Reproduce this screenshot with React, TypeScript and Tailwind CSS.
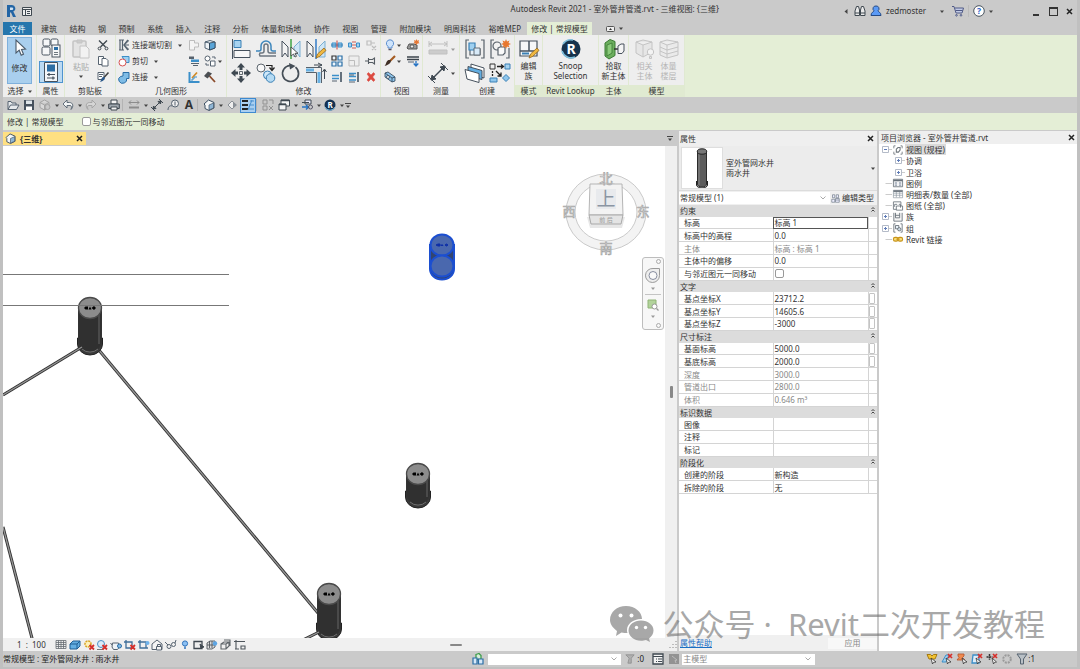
import type { ReactNode } from "react";

const D = "#566370";
const B = "#3b8fc9";
const L = "#9fd0f0";
const G = "#bdbdbd";

// small icons, 12x12
const small: Record<string, ReactNode> = {
  cut: <g fill="none" stroke="#3f4850" strokeWidth="1.4"><path d="M2 1.5l6.500 6.500M10 1.500l-6.500 6.500" /><circle cx="2.500" cy="9.500" r="1.400" strokeWidth="1" /><circle cx="9.500" cy="9.500" r="1.400" strokeWidth="1" /></g>,
  copy: <g fill="#fff" stroke={D}><path d="M1.500 1.500h5v8h-5z" /><path d="M5 3.500h4l2 2v5.500H5z" /></g>,
  brush: <g><path d="M1 1.500h6v7H1z" fill="#fff" stroke={D} /><path d="M2 3.500h4M2 5.500h3" stroke={D} /><path d="M11.500 1.500L7 6.500" stroke="#444" strokeWidth="1.600" /><path d="M7.500 6c1 1 0 4-4.500 5 1-1 1-4 3-5z" fill="#2d5a8c" /></g>,
  cope: <g fill="none" stroke={D}><path d="M2 1v10M4.500 1v10" strokeWidth="1.200" /><path d="M11 1.500L6 6l5 4.500M1 1h5M1 11h5M6 6h5" /><path d="M10 1l-4 5 4 5" strokeWidth="1.500" /></g>,
  cutGeo: <g><path d="M4 1.500h7v6H8z" fill={L} stroke={B} /><circle cx="4.500" cy="7.500" r="3.500" fill="#fff" stroke="#d65353" /></g>,
  join: <path d="M5 1.500h6v6H8.500a4 3.700 0 1 1-6-2L5 5z" fill="#7fbce6" stroke="#2a6ea6" />,
  splitGray: <path d="M1.500 1.500h5v2.500h4v4h-4v3h-5z" fill="#f4f4f4" stroke={G} />,
  cube: <g stroke="#2d4256" strokeWidth=".8"><path d="M1 3l5-1.500 5 1.500v6l-5 2-5-2z" fill="#eef3f7" /><path d="M5.500 4L11 3v6l-5.500 2z" fill="#5aa5d8" /><path d="M1 3l4.500 1v7" fill="none" /></g>,
  beam: <g><path d="M1 1.500h5v2.500H1z" fill="#56616c" /><path d="M3 4.500h8v2.500H3z" fill={B} /><path d="M3 8.500h8M5 10.500h5" stroke={D} /></g>,
  shapes: <g fill="#fff" stroke={D}><circle cx="3.500" cy="3.500" r="2.500" /><path d="M6.500 6h4.500v5H6.500zM8 2h3v2" /><path d="M2 8v2h3" fill="none" /></g>,
  demolish: <g><path d="M1.500 1v10h10" fill="none" stroke={B} strokeWidth="2" /><path d="M4 7l5-5.500" stroke="#d08a26" strokeWidth="1.700" /><path d="M4 10V8h2V6h3" fill="none" stroke={B} /></g>,
  hammer: <g><path d="M5.500 5l5.500 6" stroke="#8a4a2a" strokeWidth="1.800" /><path d="M0 5l4-4.500 4 2-4.500 5z" fill="#4b4f53" /></g>,
  splitA: <g><path d="M1 4h4v4H1zM7 4h4v4H7z" fill={L} stroke={B} /><path d="M0 6h12" stroke="#2a6ea6" strokeWidth=".8" /><path d="M6 1.500v9" stroke="#c9453c" /></g>,
  splitB: <g><path d="M.5 4h3v4h-3zM8.500 4h3v4h-3z" fill={L} stroke={B} /><path d="M5 2v2M7 2v2M5 8v2M7 8v2M5 5v2M7 5v2" stroke="#c9453c" strokeWidth=".9" /></g>,
  unpin: <g fill="none" stroke={G}><path d="M2 2h4v4H2zM6 4h4M7 7l4 4M11 7l-4 4" strokeWidth="1.200" /></g>,
  array: <g fill="#eef6fc" stroke="#2a6ea6" strokeWidth="1.200"><path d="M1 1h4v4H1z" stroke="#333" /><path d="M7 1h4v4H7zM1 7h4v4H1zM7 7h4v4H7z" /></g>,
  scale: <g fill="none" stroke={G}><path d="M1 1h10v10H1zM1 5.500h5.500V11" /></g>,
  pin: <path d="M0 6h3.500M3.500 3v6M3.500 4.500h4l2-1.500v6l-2-1.500h-4" fill="none" stroke="#555c63" strokeWidth="1.100" />,
  trim: <g><path d="M1 4.500h7M1 7.500h7" stroke={B} strokeWidth="1.500" /><path d="M10 1v10" stroke={D} strokeWidth="1.800" /><path d="M1 10h5" stroke={D} /></g>,
  trimMulti: <g><path d="M1 2.500h7M1 5.500h7M1 9h7" stroke={B} strokeWidth="1.500" /><path d="M10 1v10" stroke={D} strokeWidth="1.800" /><path d="M1 11h6M1 4h5" stroke={D} /></g>,
  del: <path d="M2 3l1.500-1.500L6 4l2.500-2.500L10 3 7.700 6 10 9l-1.500 1.500L6 8l-2.500 2.500L2 9l2.300-3z" fill="#dc4a41" stroke="#dc4a41" strokeWidth=".5" />,
  bulb: <g><path d="M6 .8a3.600 3.600 0 0 1 2 6.600V9H4V7.400A3.600 3.600 0 0 1 6 .8z" fill="#cfe4fb" stroke="#5a8ed0" /><path d="M4.500 10.500h3" stroke="#556" strokeWidth="1.500" /></g>,
  paint: <g><path d="M11 1L6 6" stroke="#a55c22" strokeWidth="2.200" /><path d="M6.500 5c1.500 1.500-1 5-6 6 1.500-1 1.500-5 4-6z" fill="#3f2e24" /></g>,
  box: <g stroke="#2d4256" strokeWidth=".8"><path d="M1 2l3-1 7 5v4l-3 1-7-5z" fill="#8ec4ea" /><path d="M1 2l7 5v4M8 7l3-1" fill="none" /><circle cx="4" cy="6" r="1.500" fill="#fff" /></g>,
  gearFx: <g><path d="M0 9l2-4h5l3 1v4H1z" fill="#9b9b9b" stroke="#555" /><circle cx="5" cy="7.500" r="1.700" fill="#eee" stroke="#555" /><path d="M9.500 0l.8 1.700L12 1l-.5 2 1 1.300-2 .2-1 1.500-1-1.500-2-.2 1-1.300L7 1l1.700.7z" fill="#e57734" /></g>,
  thin: <g><path d="M0 2h12M0 4.500h12" stroke="#3c444c" strokeWidth="1.400" /><path d="M1 7h6" stroke={D} /><path d="M9 6v5M6.700 8.500L9 11l2.300-2.500" stroke="#2774c4" strokeWidth="1.300" fill="none" /></g>,
  open: <path d="M1 10.500v-8h3l1 1.500h4v2M1 10.500L3.500 6H12l-2.500 4.500z" fill="#e6e9ec" stroke={D} />,
  save: <g><path d="M1 1h10v10H1z" fill="#46515e" /><path d="M3 1.500h6v3.500H3z" fill="#dfe5ea" /><path d="M3 7.500h6V11H3z" fill="#fff" /></g>,
  cubeGray: <g stroke="#a3a3a3"><path d="M1 3.500L5.500 1 10 3.500v5L5.500 11 1 8.500zM1 3.500L5.500 6 10 3.500M5.500 6v5" fill="#d9d9d9" /><circle cx="8.500" cy="8" r="2.500" fill="#c8c8c8" /></g>,
  undo: <path d="M5 1L1 5l4 4V6.500h3c1.500 0 2 1.500 1 4 3-3 2-7-1.500-7H5z" fill="#f2f4f5" stroke={D} strokeWidth=".9" />,
  redo: <path d="M7 1l4 4-4 4V6.500H4C2.500 6.500 2 8 3 10.500c-3-3-2-7 1.500-7H7z" fill="#d5d5d5" stroke="#a3a3a3" strokeWidth=".9" />,
  print: <g fill="#f4f4f4" stroke="#3f4850"><path d="M3 1h6v4H3z" /><path d="M.7 5h10.600v4.500H.7z" fill="#9fa7ae" /><path d="M3 8h6v3H3z" /></g>,
  meas: <g stroke="#8c8c8c" fill="none"><path d="M1 3.500h10M3 1.500l-2 2 2 2M9 1.500l2 2-2 2" /><path d="M1 8.500h10" strokeWidth="2" /></g>,
  dim: <g stroke="#3f4850" fill="none"><path d="M2 10l8-8" /><path d="M2 10l.5-3L5 9.500zM10 2l-.5 3L7 2.500z" fill="#3f4850" /><path d="M0 8l4 4M8 0l4 4" /></g>,
  tag: <g fill="none" stroke={D}><circle cx="8" cy="4.500" r="3.500" fill="#eee" /><path d="M8 2.500v4M5 7c-2-1-4 1-4 4" /></g>,
  house: <g><path d="M1 5l4.500-4L11 3.500V9l-5 2.500-4-2V6z" fill="#f4f6f7" stroke="#3d5063" /><path d="M6 6l4.500-2v5L6 11z" fill="#8fb6d6" stroke="#3d5063" strokeWidth=".7" /></g>,
  section: <g><path d="M6 2l4 4-4 4-4-4z" fill="#eee" stroke="#8a9097" /><path d="M7 2.500L11 6 7 9.500z" fill="#8a9097" /></g>,
  lines: <g><path d="M0 2h6M0 6h6M0 10h6" stroke="#222" strokeWidth="2" /><path d="M6 11l4-10" stroke="#4a90cf" /><path d="M8 2h4M7 6h5M7 10h5" stroke="#4a90cf" /></g>,
  closeWin: <g fill="none" stroke="#929292"><path d="M1 1h4v4H1zM1 7h4v4H1zM7 1h4v4M7 7l4 4M11 7l-4 4" /></g>,
  wins: <g fill="#f4f4f4" stroke="#3f4850"><path d="M3 1h8.500v6H3z" /><path d="M1 5h7v6H1z" /><path d="M1 5.500h7M3 1.500h8" strokeWidth="1.500" /></g>,
  ui: <g><path d="M1 3.500h7M4 1h6v4H4z" stroke="#3f4850" fill="#eef" /><path d="M1 8h6M5 6l2.500 2L5 10.500" stroke="#2774c4" strokeWidth="1.500" fill="none" /><circle cx="9.500" cy="8" r="2" fill="none" stroke="#556" /></g>,
  lookup: <g><circle cx="6" cy="6" r="5.500" fill="#143252" /><path d="M1 8a5.500 5.500 0 0 0 10 0" stroke="#6fb5dc" fill="none" /><text x="6" y="9" textAnchor="middle" fontSize="8" fontWeight="700" fill="#fff">R</text></g>,
  mesh: <path d="M1 1.500h10v8H1zM1 3.500h10M1 5.500h10M1 7.500h10M3.500 1.500v8M6 1.500v8M8.500 1.500v8" fill="#eee" stroke="#666c72" strokeWidth=".8" />,
  solid: <path d="M1 5l3-3h7v5l-3 3H1zM1 5h7v5M8 5l3-3" fill="#62aee2" stroke="#1f5f94" />,
  sunOff: <g><circle cx="5" cy="5" r="3" fill="#fff2b8" stroke="#d8a324" strokeWidth="1.500" strokeDasharray="2 .8" /><path d="M6.500 6l4.500 4.500M11 6l-4.500 4.500" stroke="#d62f2b" strokeWidth="1.800" /></g>,
  shadeOff: <g><circle cx="5" cy="5" r="3.500" fill="#dcecf8" stroke="#4d91c6" /><path d="M1 10.500h6" stroke="#777" /><path d="M6.500 6l4.500 4.500M11 6l-4.500 4.500" stroke="#d62f2b" strokeWidth="1.800" /></g>,
  teapot: <g fill="#eef3f7" stroke={D}><path d="M2.500 4h6l1 4-2 2.500h-4L2 8zM2 6L.5 4" /><circle cx="9.500" cy="7" r="2" fill="#7fb8e4" stroke="#2a6ea6" /></g>,
  cropOff: <g><path d="M2 1v8h8M0 3h8v6" fill="none" stroke="#3f6f9a" strokeWidth="1.300" /><path d="M6.500 6l4.500 4.500M11 6l-4.500 4.500" stroke="#d62f2b" strokeWidth="1.800" /></g>,
  cropOn: <g><path d="M2 1v8h8M0 3h8v6" fill="none" stroke="#3f6f9a" strokeWidth="1.300" /><circle cx="9.500" cy="4" r="2" fill="#6fb3ec" /></g>,
  lock3d: <g fill="#f4f4f4" stroke={D}><path d="M1 5l5-4 5 4v5.500H1z" /><path d="M5.500 7.500h5v3.500h-5zM6.500 7V5.500h3V7" /></g>,
  glasses: <g fill="none" stroke={D}><path d="M0 3l3 3M11 1l-1 3" /><circle cx="4" cy="7.500" r="2" /><circle cx="8.500" cy="5.500" r="2" /></g>,
  bulbMini: <g><circle cx="6" cy="4.500" r="2.600" fill="#8bc0f3" stroke="#3173bb" /><path d="M6 7.500V10" stroke="#3173bb" strokeWidth="1.500" /></g>,
  screen: <g fill="#eee" stroke="#3f4850"><path d="M1 2.500h8v7H1z" strokeWidth="1.300" /><path d="M7 5l4 3-2 .5L8 10z" fill="#3f4850" /></g>,
  analytic: <g><path d="M1 4l3-2h5v6l-3 2H1zM3.500 2v7M6 2v7M1 6h8" fill="#ddd" stroke="#4f565c" strokeWidth=".9" /><circle cx="9" cy="4.500" r="2.200" fill="#5da5e4" /></g>,
  link3d: <path d="M1 5l3-2h5v4l-3 3H1zM4 1h6v6M1 5h5v5M6 5l3-2" fill="none" stroke="#60666b" strokeWidth="1.100" />,
  constraint: <path d="M2 1v9M2 2.500h9M1 10h4M7 7h4v3H7zM0 2.500h2" fill="none" stroke="#4f565c" strokeWidth="1.100" />,
  filter: <path d="M1 1h10L7.500 6v5h-3V6z" fill="#b9c0c6" stroke={D} />,
  filterGray: <path d="M1 1h10L7.500 5v6h-4L5 5z" fill="#b0b0b0" stroke="#8e8e8e" />,
  worksets: <g fill="#d9edda"><path d="M4 1.500l3-1 2 2v4H4z" stroke="#3f9d4b" strokeWidth="1.300" /><path d="M1 5h4v6H1zM6.500 6H11v5H6.500z" fill="#d8e9f8" stroke="#2a6ea6" strokeWidth="1.200" /></g>,
  sheet: <g><path d="M1 1h10v10H1z" fill="#f3f3f3" stroke="#3f4850" strokeWidth="1.300" /><path d="M1 3.500h10M4 6h1M6 6h4M4 8.500h1M6 8.500h4" stroke="#3f4850" /></g>,
  press: <g><path d="M1 1h10v10H1z" fill="#929292" /><path d="M4 3l5 4-2 .5 1 2.500" stroke="#bbb" fill="none" /></g>,
  selA: <g><path d="M1 1.500h3.500L6 3l1.500-1.500H11L9 6H3z" fill="#f1c232" stroke="#a67a12" /><path d="M5 5l5 4-2.500.3L6.500 11z" fill="#fff" stroke="#333" strokeWidth=".8" /></g>,
  selB: <g><path d="M1 9l4-7h3L5 9z" fill={L} stroke={B} /><path d="M7 1l4 4M11 1L7 5" stroke="#d62f2b" strokeWidth="1.700" /><path d="M5 5l5 4-2.500.3L6.500 11z" fill="#fff" stroke="#333" strokeWidth=".8" /></g>,
  selC: <g><path d="M2 1h6v2L6.500 4.500 9 7H1l2-2.500L2 3z" fill="#ef8a4f" stroke="#b4522a" strokeWidth=".8" /><path d="M6 5l5 4-2.500.3L7.500 11z" fill="#fff" stroke="#333" strokeWidth=".8" /></g>,
  selD: <g><path d="M2 2h6v8H1z" fill="#dcedfa" stroke={B} strokeWidth="1.300" /><path d="M7 1l4 4M11 1L7 5" stroke="#d62f2b" strokeWidth="1.700" /><path d="M5 5l5 4-2.500.3L6.500 11z" fill="#fff" stroke="#333" strokeWidth=".8" /></g>,
  selE: <g><path d="M3.500 1v6M.5 4h6" stroke="#333" strokeWidth="1.500" strokeDasharray="2 .6" /><path d="M7 1l4 4M11 1L7 5" stroke="#d62f2b" strokeWidth="1.700" /><path d="M6 5l4.500 4-2 .3-1 1.700z" fill="#fff" stroke="#333" strokeWidth=".8" /></g>,
  spin: <circle cx="6" cy="6" r="3.800" fill="none" stroke="#9a9a9a" strokeWidth="2" strokeDasharray="2 1" />,
  editType: <g fill="#eef" stroke="#6c7885" strokeWidth=".9"><path d="M2 1h3v4H2zM7 1h3v4H7zM1 7h4v4H1z" /><path d="M6 6h5v5H6zM6 8h5" /></g>,
  views: <g fill="none" stroke="#6f767c"><path d="M3 1H1v3M1 8v3h2M9 1h2v3M11 8v3H9" /><path d="M4 5l2-2h2.500v3l-2 2.500H4z" fill="#fff" strokeWidth="1.300" /></g>,
  legend: <g><path d="M.5 1.500h11v9H.5z" fill="#fff" stroke="#68717a" /><path d="M.5 3h11" stroke="#68717a" strokeWidth="2" /><path d="M2 6h3M7 6h3M2 8.500h3M7 8.500h3" stroke="#4b5c77" /></g>,
  schedule: <g><path d="M.5 1.500h11v9H.5zM.5 5h11M.5 7.500h11M4 3v7M8 3v7" fill="#fff" stroke="#8b95a0" strokeWidth=".8" /><path d="M.5 2.500h11" stroke="#68717a" strokeWidth="2" /></g>,
  sheets: <g fill="#fff" stroke="#68717a"><path d="M.5 1h9v9h-9z" /><path d="M2 7V4h3M4 6h7.500v5H4zM7 4h2v4" /></g>,
  family: <g fill="none" stroke="#626b74"><path d="M1 1v10h10V1" fill="#f5f5f5" /><path d="M3 1v6h5V1M3 4h5" /></g>,
  group: <g fill="none" stroke="#626b74"><path d="M3 1H1v10h2M9 1h2v10H9" /><path d="M3 3h4v4H3z" fill="#e7f0f8" /><circle cx="7.500" cy="7.500" r="2" fill="#cfdce8" /></g>,
  chain: <g fill="#f7dc76" stroke="#c8941a" strokeWidth="1.300"><rect x=".5" y="4" width="5.500" height="4.500" rx="2" /><rect x="6" y="4" width="5.500" height="4.500" rx="2" /><path d="M4 6.200h4" /></g>,
  binoc: <g fill="#e9e9e9" stroke="#3f4850"><path d="M2.500 1.500h2L5.500 5v5.500h-4.500V6zM9.500 1.500h-2L6.500 5v5.500H11V6zM1 8h4.500M6.500 8H11" /></g>,
  user: <g fill="#5b9af5" stroke="#244a86"><path d="M6 1a2.700 2.700 0 0 1 2 4.800c0 1.200 3 1.200 3 4.700H1C1 7 4 7 4 5.800A2.700 2.700 0 0 1 6 1z" /></g>,
  cart: <g fill="#c3cbe6" stroke="#505a86"><path d="M0 1.500h2L4 8h6l1.500-5H3" /><path d="M3.500 5.500h7" /><circle cx="4.500" cy="10.300" r=".8" /><circle cx="9" cy="10.300" r=".8" /></g>,
  help: <g><circle cx="6" cy="6" r="5.300" fill="#fff" stroke="#4a5560" /><text x="6" y="9" textAnchor="middle" fontSize="8.500" fontWeight="700" fill="#2b61c9">?</text></g>,
};

// large icons, 20x20
const large: Record<string, ReactNode> = {
  cursor: <path d="M6 2v13l3.200-2.800 2 5 2.300-1-2-4.800 4-.400z" fill="#fff" stroke="#4a5a6a" strokeWidth="1.100" />,
  types: <g fill="#f6f7f8" stroke="#4a5560"><rect x="2" y="1" width="7" height="7" rx="1.500" /><rect x="10" y="1" width="7" height="7" rx="1.500" /><rect x="1" y="9" width="8" height="8" rx="1.500" /><rect x="11" y="7" width="8" height="12" /><path d="M13 9h4v3h-4z" fill="#2a6ea6" stroke="none" /><path d="M13 14.500h4M13 16.500h4" strokeWidth=".8" /></g>,
  props: <g><path d="M3.500.5h13v19h-13z" fill="#f4f6f8" stroke="#45515d" /><path d="M6 2.500h8v7H6z" fill="#2d6da3" /><path d="M6 12.500h8M6 16h8" stroke="#45515d" /><path d="M8 11v3M12 14.500v3" stroke="#45515d" strokeWidth="1.300" /></g>,
  paste: <g fill="#e4e4e4" stroke="#c4c4c4"><rect x="2" y="2" width="13" height="16" rx="1" strokeWidth="1.500" /><path d="M6 1h5v3H6z" fill="#ccc" /><path d="M9 7h6l3 3v9H9z" fill="#f2f2f2" /></g>,
  align: <g stroke="#46515d"><path d="M1.500 0v20" /><path d="M3 1.500h7v7H3z" fill="#a7d3f0" stroke="#3a80b5" /><path d="M3 11.500h16v7H3z" fill="#f7f7f7" /></g>,
  offset: <g fill="none" strokeWidth="1.500"><path d="M0 12h3a2 2 0 0 0 2-2V7a5 5 0 0 1 10 0v3a2 2 0 0 0 2 2h3" stroke="#3e87bd" /><path d="M20 17H4a2.500 2.500 0 0 1 0-3h2a2 2 0 0 0 2-2V7a2 2 0 0 1 4 0v5a2 2 0 0 0 2 2h6" stroke="#6c7680" /></g>,
  mirrorPick: <g><path d="M1 2l6 6v10l-3-4-3 4z" fill="#f3f3f3" stroke="#46515d" /><path d="M19 2l-6 6v10l3-4 3 4z" fill="#cfe6f6" stroke="#7aaed1" /><path d="M10 0v20" stroke="#4aa94f" strokeWidth="1.600" /><path d="M10 8v9l2.500-2 1.500 3 1.500-.7-1.500-3h3z" fill="#fff" stroke="#444" strokeWidth=".9" /></g>,
  mirrorDraw: <g><path d="M1 2l6 6v10l-3-4-3 4z" fill="#f3f3f3" stroke="#46515d" /><path d="M19 2l-6 6v10h6z" fill="#cfe6f6" stroke="#7aaed1" /><path d="M10 0v20" stroke="#2774c4" strokeWidth="1.400" /><path d="M10 19l1.500-4L18 9l2 2.500-6.500 6z" fill="#f0b840" stroke="#93641a" strokeWidth=".8" /></g>,
  move: <g fill="#3f4952"><path d="M10 0l4 4.500h-2.500V7h-3V4.500H6zM10 20l4-4.500h-2.500V13h-3v2.500H6zM0 10l4.500-4v2.500H7v3H4.500V14zM20 10l-4.500-4v2.500H13v3h2.500V14z" /><path d="M8.500 8.500h3v3h-3z" fill="#eee" stroke="#3f4952" strokeWidth=".8" /></g>,
  copyEl: <g><circle cx="5" cy="5" r="4" fill="#f7f7f7" stroke="#5d666e" /><path d="M10 2.500h6v4M13.500 4.500l2.500 3L18.500 4.500" fill="none" stroke="#222" strokeWidth="1.200" /><circle cx="11.500" cy="12" r="4" fill="#cfe8f9" stroke="#3a80b5" /><circle cx="14.500" cy="15" r="4.300" fill="#b4daf3" stroke="#3a80b5" /></g>,
  rotate: <g fill="none"><path d="M14.500 4.200A8 8 0 1 1 9 2.500" stroke="#454e57" strokeWidth="1.700" /><path d="M8 0l6.500 3L9 6.500z" fill="#454e57" /></g>,
  corner: <g fill="none"><path d="M0 4.500h15.500V20M0 9.500h10.500V20" stroke="#59626b" /><path d="M0 7h8M13 9v11" stroke="#67b1e4" strokeWidth="3" /><path d="M8 2h8M18.500 7v9M12 0l4 2-4 2M16.500 9l2-3 2 3" stroke="#3f4952" /></g>,
  ruler: <g stroke="#c0c0c0" fill="none"><path d="M1 5h18M1 2v6M19 2v6M4 3L1 5l3 2M16 3l3 2-3 2" /><path d="M1 11h18v4H1z" fill="#ccc" /></g>,
  measure: <g stroke="#3f4952" fill="none"><path d="M3 17L17 3" strokeWidth="1.500" /><path d="M0 13l7 7M13 0l7 7" /><path d="M3 17l1-5 4 4zM17 3l-1 5-4-4z" fill="#3f4952" /></g>,
  assembly: <g fill="none" stroke="#59626b" strokeWidth="1.200"><path d="M4 1H1v18h3M16 1h3v18h-3" /><path d="M5 10h10v6H5z" fill="#e8f2fa" /><path d="M4 4h6v7H4z" fill="#9fd0f0" stroke="#3a80b5" /><path d="M9 9h6v7H9z" fill="#d8eaf8" stroke="#59626b" strokeWidth=".9" /></g>,
  group: <g fill="none" stroke="#59626b" strokeWidth="1.200"><path d="M4 1H1v18h3M16 19h3V9" /><circle cx="7" cy="7" r="4" fill="#f2f2f2" /><path d="M8 9l2-1h5v6l-2 2H8z" fill="#fafafa" /><path d="M16 0l1 2.500L19.500 1.500 18.500 4 21 5l-2.500 1 1 2.500-2.500-1L16 10l-1-2.500-2.500 1 1-2.500-2.500-1 2.500-1-1-2.500 2.500 1z" fill="#e8772e" stroke="none" /></g>,
  sheetsBlue: <g stroke="#46515d"><path d="M6 1l13 4v10L6 11z" fill="#fff" /><path d="M3 3.500l14 4v9L3 13z" fill="#62aee2" /><path d="M0 6.500l14 4v9L2 16z" fill="#fff" /></g>,
  replace: <g><path d="M15 1h5v5h-5z" fill="#a7d3f0" stroke="#3a80b5" /><path d="M0 1h5v5H0z" fill="#eee" stroke="#333" /><path d="M7 3.500h6M11 1.500l2.500 2-2.500 2M2.500 8v2M2.500 11v2M6 8l5 5M11 9.500V13H7.500" stroke="#222" fill="none" strokeWidth="1.300" /><path d="M0 15h7v4H0z" fill="#8ec6ed" stroke="#3a80b5" /><path d="M16 11.500l3.500 3.500-3.500 3.500-3.500-3.500z" fill="#8ec6ed" stroke="#3a80b5" /></g>,
  editFam: <g><path d="M1 2h17v15H1z" fill="#f6f7f8" stroke="#46515d" strokeWidth="1.200" /><path d="M1 12h9V2M10 12h8" fill="none" stroke="#46515d" strokeWidth="1.500" /><path d="M3 14.500h7" stroke="#3a80b5" strokeWidth="2" /><path d="M10 19l1.500-4L18 9l2 2.500-6.500 6z" fill="#f0b840" stroke="#93641a" strokeWidth=".8" /></g>,
  snoop: <g><circle cx="10" cy="10" r="9.500" fill="#16324c" /><path d="M2 5a9.500 9.500 0 0 1 10-4M1 12a9.500 9.500 0 0 0 13 6" stroke="#7fbfdc" strokeWidth="1.600" fill="none" /><text x="10" y="15" textAnchor="middle" fontSize="14" fontWeight="700" fill="#fff">R</text></g>,
  host: <g><path d="M1 4l5-3.500 5 2v14L5 20l-4-3z" fill="#6cae5e" stroke="#3b7a34" /><path d="M3 6l5-2v10l-5 3z" fill="#8ccb7c" stroke="#3b7a34" strokeWidth=".8" /><path d="M10 10h4" stroke="#333" strokeWidth="1.500" /><path d="M14 7l3-2h3v7l-2 2.500h-4z" fill="#f4f4f4" stroke="#46515d" /></g>,
  massHost: <g fill="#e6e6e6" stroke="#c4c4c4"><path d="M1 3l7-2 9 2v10l-9 5-7-4zM1 3l7 3 9-3M8 6v12" /><circle cx="15.500" cy="13" r="3.200" fill="#f3f3f3" /><path d="M14.500 17.500h2v2h-2z" /></g>,
  massFloor: <g fill="#eaeaea" stroke="#c4c4c4"><path d="M1 3l7-2 11 2v13l-11 3-7-3zM1 3l7 3 11-3M8 6v13M1 8l7 3 11-3M1 12l7 3 11-3" /></g>,
};

function Ico({ n, s = 12 }: { n: string; s?: number }) {
  return <svg width={s} height={s} viewBox="0 0 12 12" className="shrink-0 overflow-visible">{small[n]}</svg>;
}

function Big({ n, s = 20 }: { n: string; s?: number }) {
  return <svg width={s} height={s} viewBox="0 0 20 20" className="shrink-0 overflow-visible">{large[n]}</svg>;
}

function Caret({ light }: { light?: boolean }) {
  return (
    <svg width="4" height="3" viewBox="0 0 4 3" className="shrink-0">
      <path d="M0 .500h4L2 3z" fill={light ? "#9a9a9a" : "#444"} />
    </svg>
  );
}

function Chevron() {
  return (
    <svg width="6" height="4" viewBox="0 0 6 4" className="pointer-events-none shrink-0">
      <path d="M.500.500L3 3 5.500.500" fill="none" stroke="#aaa" />
    </svg>
  );
}

function Close() {
  return (
    <svg width="7" height="7" viewBox="0 0 7 7">
      <path d="M1 1l5 5M6 1L1 6" stroke="#222" strokeWidth="1.500" />
    </svg>
  );
}

function IconBtn({ n, label, big, className = "" }: { n: string; label: string; big?: boolean; className?: string }) {
  return (
    <button aria-label={label} className={`flex items-center justify-center ${className}`}>
      {big ? <Big n={n} /> : <Ico n={n} />}
    </button>
  );
}

function Panel({ label, width, context, children }: { label: ReactNode; width: string; context?: boolean; children: ReactNode }) {
  return (
    <section className={`flex shrink-0 flex-col border-r border-[#e0e9d2] bg-[#eeeeee] ${width}`}>
      <div className="flex h-[50px] items-start justify-center pt-0.5">{children}</div>
      <div className={`flex h-3 items-center justify-center whitespace-nowrap ${context ? "bg-[#e0ead1]" : ""}`}>{label}</div>
    </section>
  );
}

const menuTabs = ["建筑", "结构", "钢", "预制", "系统", "插入", "注释", "分析", "体量和场地", "协作", "视图", "管理", "附加模块", "明周科技", "裕唯MEP"];

function TitleBar() {
  return (
    <header className="flex h-[22px] items-center pr-1">
      <div className="flex flex-1 items-center gap-1.5 pl-1">
        <svg width="9" height="12" viewBox="0 0 9 12">
          <path d="M0 0h5a3.400 3.400 0 0 1 1.300 6.500L9 12H6L4 7.500H3V12H0z" fill="#2365a5" />
          <path d="M3 2.500h2a1.200 1.200 0 0 1 0 2.500H3z" fill="#cfe1f2" />
        </svg>
        <svg width="10" height="9" viewBox="0 0 10 9">
          <path d="M.500.500h9v8h-9zM.500 2.500h9M3.500 2.500v6M5 4.500h3M5 6.500h3" fill="#eee" stroke="#3f4850" />
        </svg>
      </div>
      <h1 className="pb-1 font-normal whitespace-nowrap">Autodesk Revit 2021 - 室外管井管道.rvt - 三维视图: {"{三维}"}</h1>
      <div className="ml-[125px] flex items-center">
        <svg width="4" height="5" viewBox="0 0 4 5"><path d="M3.500 0v5L.500 2.500z" fill="#444" /></svg>
        <IconBtn n="binoc" label="搜索" className="ml-1.5" />
        <button className="ml-1 flex items-center gap-1"><Ico n="user" />zedmoster</button>
        <span className="ml-3.5"><Caret /></span>
        <IconBtn n="cart" label="商店" className="ml-2" />
        <span className="mx-1 h-3 w-px bg-[#bcbcbc]" />
        <IconBtn n="help" label="帮助" />
        <span className="ml-1"><Caret /></span>
        <button aria-label="最小化" className="ml-10 flex h-[9px] w-2 items-end"><span className="h-0.5 w-1.5 bg-[#333]" /></button>
        <button aria-label="最大化" className="ml-2 size-[9px] border border-t-2 border-[#333]" />
        <button aria-label="关闭" className="ml-2"><Close /></button>
      </div>
    </header>
  );
}

function MenuBar() {
  return (
    <nav className="flex h-[13px] items-center">
      <button className="h-full w-[29px] bg-[#2576ad] text-white">文件</button>
      <div className="ml-[9px] flex w-[480px] shrink-0 justify-between whitespace-nowrap">
        {menuTabs.map((t) => <button key={t}>{t}</button>)}
      </div>
      <button className="ml-1.5 h-full w-[65px] shrink-0 bg-[#e4eed6] whitespace-nowrap">修改 | 常规模型</button>
      <button aria-label="最小化功能区" className="ml-3.5 flex items-center gap-1">
        <svg width="9" height="6" viewBox="0 0 9 6"><rect x=".500" y=".500" width="8" height="5" rx="1" fill="#eee" stroke="#555" /><path d="M3 4h3L4.500 2z" fill="#333" /></svg>
        <Caret />
      </button>
    </nav>
  );
}

function Ribbon() {
  return (
    <div className="flex bg-[#e4eed6]">
      <Panel width="w-[34px]" label={<span className="flex items-center gap-1">选择 <Caret /></span>}>
        <button className="flex h-[47px] w-[25px] flex-col items-center gap-1 border border-[#7fb0dc] bg-[#a9cfee]">
          <Big n="cursor" />修改
        </button>
      </Panel>
      <Panel width="w-[28px]" label="属性">
        <div className="flex flex-col gap-0.5">
          <IconBtn big n="types" label="族类型" className="h-[22px] w-6" />
          <IconBtn big n="props" label="属性" className="h-[22px] w-6 border border-[#4f94cf] bg-[#bcdaf2]" />
        </div>
      </Panel>
      <Panel width="w-[51px]" label="剪贴板">
        <button className="mr-1.5 flex h-[47px] flex-col items-center gap-0.5 pt-0.5 text-[#aaa]"><Big n="paste" />粘贴<Caret /></button>
        <div className="grid auto-rows-[16px]">
          <IconBtn n="cut" label="剪切到剪贴板" /><IconBtn n="copy" label="复制到剪贴板" /><IconBtn n="brush" label="匹配类型" />
        </div>
      </Panel>
      <Panel width="w-[111px]" label="几何图形">
        <div className="grid w-[66px] auto-rows-[16px]">
          <button className="flex items-center gap-0.5 whitespace-nowrap"><Ico n="cope" />连接端切割<span className="ml-1"><Caret /></span></button>
          <button className="flex items-center gap-0.5"><Ico n="cutGeo" />剪切<span className="ml-1"><Caret /></span></button>
          <button className="flex items-center gap-0.5"><Ico n="join" />连接<span className="ml-1"><Caret /></span></button>
        </div>
        <div className="ml-0.5 grid auto-rows-[16px] grid-cols-[16px_16px_6px] items-center">
          <IconBtn n="splitGray" label="应用连接端切割" /><IconBtn n="cube" label="拆分面" /><span />
          <IconBtn n="beam" label="梁连接" /><IconBtn n="shapes" label="墙连接" /><Caret />
          <IconBtn n="demolish" label="填色" /><IconBtn n="hammer" label="拆除" /><span />
        </div>
      </Panel>
      <Panel width="w-[154px]" label="修改">
        <div className="grid auto-rows-[24px] grid-cols-4">
          {["align", "offset", "mirrorPick", "mirrorDraw", "move", "copyEl", "rotate", "corner"].map((n) => <IconBtn big key={n} n={n} label={n} className="w-[25px]" />)}
        </div>
        <div className="grid auto-rows-[16px] grid-cols-3">
          {["splitA", "splitB", "unpin", "array", "scale", "pin", "trim", "trimMulti", "del"].map((n) => <IconBtn key={n} n={n} label={n} className="w-[17px]" />)}
        </div>
      </Panel>
      <Panel width="w-[42px]" label="视图">
        <div className="grid auto-rows-[16px] grid-cols-[14px_9px_14px] items-center">
          <IconBtn n="bulb" label="隐藏" /><Caret /><IconBtn n="gearFx" label="替换" />
          <IconBtn n="paint" label="图形" /><Caret /><IconBtn n="thin" label="线处理" />
          <IconBtn n="box" label="选择框" />
        </div>
      </Panel>
      <Panel width="w-[37px]" label="测量">
        <div className="grid auto-rows-[24px] grid-cols-[26px_6px] items-center">
          <IconBtn big n="ruler" label="尺寸" /><Caret light /><IconBtn big n="measure" label="测量" /><Caret />
        </div>
      </Panel>
      <Panel width="w-[55px]" label="创建">
        <div className="grid auto-rows-[24px] grid-cols-2">
          {["assembly", "group", "sheetsBlue", "replace"].map((n) => <IconBtn big key={n} n={n} label={n} className="w-[25px]" />)}
        </div>
      </Panel>
      <Panel context width="w-[28px]" label="模式">
        <button className="flex flex-col items-center gap-0.5 pt-0.5 leading-[10px]"><Big n="editFam" /><span>编辑<br />族</span></button>
      </Panel>
      <Panel context width="w-[56px]" label="Revit Lookup">
        <button className="flex flex-col items-center gap-0.5 pt-0.5 leading-[10px]"><Big n="snoop" /><span>Snoop<br />Selection</span></button>
      </Panel>
      <Panel context width="w-[30px]" label="主体">
        <button className="flex flex-col items-center gap-0.5 pt-0.5 leading-[10px] whitespace-nowrap"><Big n="host" /><span>拾取<br />新主体</span></button>
      </Panel>
      <Panel context width="w-[56px]" label="模型">
        <div className="flex gap-1 pt-0.5 leading-[10px] text-[#b5b5b5]">
          <button className="flex flex-col items-center gap-0.5"><Big n="massHost" /><span>相关<br />主体</span></button>
          <button className="flex flex-col items-center gap-0.5"><Big n="massFloor" /><span>体量<br />楼层</span></button>
        </div>
      </Panel>
    </div>
  );
}

const quick = ["open", "save", "cubeGray", "v", "undo", "v", "redo", "v", "print", "|", "meas", "v", "dim", "tag", "A", "|", "house", "v", "section", "lines", "|", "closeWin", "wins", "v", "ui", "v", "lookup", "v"];

function QuickBar() {
  return (
    <div className="flex h-4 items-center pl-0.5">
      {quick.map((q, i) => {
        if (q === "v") return <span key={i} className="flex w-[7px] justify-center"><Caret /></span>;
        if (q === "|") return <span key={i} className="mr-[3px] h-3 w-px bg-[#b4b4b4]" />;
        if (q === "A") return <button key={i} className="w-4 text-[12px] leading-4 font-bold text-[#333]">A</button>;
        return <IconBtn key={i} n={q} label={q} className={q === "lines" ? "h-[15px] w-4 border border-[#3e8ad0] bg-[#a9cff0]" : "w-4"} />;
      })}
      <button aria-label="自定义" className="flex w-1.5 flex-col items-center gap-px"><span className="h-px w-1.5 bg-[#444]" /><Caret /></button>
    </div>
  );
}

function Well({ x, y, h }: { x: number; y: number; h: number }) {
  return (
    <g transform={`translate(${x} ${y})`}>
      <path d={`M-12.500 ${h - 17}v6a12.500 11 0 0 0 25 0v-6z`} fill="#3a3a3a" stroke="#222" />
      <path d={`M-11.500 0v${h - 14}a11.500 11 0 0 0 23 0V0z`} fill="#303030" stroke="#333" />
      <path d={`M9 4v${h - 15}`} stroke="#4a4a4a" strokeWidth="2" />
      <path d={`M-8 ${h - 6}a11.500 11 0 0 0 16 0`} fill="none" stroke="#888" strokeWidth=".7" />
      <ellipse rx="11.500" ry="10.500" fill="#8c8c8c" stroke="#4a4a4a" strokeWidth="1.300" />
      <path d="M-6 0l1.500-1.500h2.500v3h-2.500zM-1.500 1.500l1.500-3 1.500 3zM1.500 0l2.500-2 2 2-2 2z" fill="#000" />
    </g>
  );
}

function Pipe({ d }: { d: string }) {
  return (
    <g fill="none">
      <path d={d} stroke="#2e2e2e" strokeWidth="3" />
      <path d={d} stroke="#969696" strokeWidth="1.300" />
    </g>
  );
}

function Model() {
  return (
    <svg className="block h-full w-full" aria-label="三维模型">
      <g transform="translate(-3 -146)">
        <Pipe d="M98 349L318 613" />
        <Pipe d="M3 527L33 642" />
        <Well x={90} y={308} h={47} />
        <Pipe d="M3 395L82 347" />
        <path d="M3 274.500h226M3 305.500h226" stroke="#777" />
        <Well x={418} y={474} h={34} />
        <Well x={329} y={594} h={46} />
        <Pipe d="M303 640L319 632" />
        <g stroke="#1c4fd0" strokeWidth="2">
          <path d="M430 245v24a12 10.500 0 0 0 24 0v-24z" fill="#33456f" />
          <ellipse cx="442" cy="245" rx="11.500" ry="10.500" fill="#4a68ae" />
          <ellipse cx="442" cy="266" rx="11.500" ry="10.500" fill="#4a68ae" />
          <path d="M436 245l2-1h2v2h-2zM441 245.500l1-1 1 1zM445 245l1.500-1 1.500 1-1.500 1z" fill="#0d2fa8" stroke="#0d2fa8" strokeWidth="1" />
        </g>
      </g>
    </svg>
  );
}

function ViewCube() {
  return (
    <svg width="92" height="94" viewBox="0 0 92 94" className="absolute top-[23px] right-[13px]">
      <ellipse cx="46" cy="43" rx="35.500" ry="33.500" fill="none" stroke="#f3f3f3" strokeWidth="9" />
      <ellipse cx="46" cy="43" rx="40" ry="38" fill="none" stroke="#cacaca" />
      <ellipse cx="46" cy="43" rx="31" ry="29" fill="#fff" stroke="#cacaca" />
      <path d="M27 48h38l-3 11H30z" fill="#888" opacity=".2" />
      <path d="M30 15h32l1 31H29z" fill="#f3f3f3" stroke="#b5b5b5" />
      <path d="M29 46h34l-2 9H31z" fill="#e4e4e4" stroke="#a9a9a9" />
      <path d="M36 20h20v20H36z" fill="#e8eaed" />
      <g textAnchor="middle" fill="#f0f0f0" stroke="#a6a6a6" strokeWidth=".7">
        <text x="46" y="37" fontSize="19" fill="#8b95a3" stroke="none">上</text>
        <text x="46" y="53" fontSize="6" fill="#999" stroke="none">前 后</text>
        <text x="46" y="14" fontSize="13">北</text>
        <text x="46" y="84" fontSize="13">南</text>
        <text x="9" y="47" fontSize="13">西</text>
        <text x="83" y="47" fontSize="13">东</text>
      </g>
    </svg>
  );
}

function NavBar() {
  return (
    <div className="absolute top-[111px] right-px flex h-[73px] w-[22px] flex-col items-center rounded-[3px] border border-[#bdbdbd] bg-[#f7f7f7]">
      <span className="mt-px mr-0.5 size-[5px] self-end rounded-full border border-[#aaa]" />
      <button aria-label="控制盘" className="mt-1">
        <svg width="16" height="15" viewBox="0 0 16 15"><path d="M8 .500h6.500v7a7 7 0 1 1-6.500-7z" fill="#eee" stroke="#9a9a9a" /><circle cx="8" cy="7.500" r="4" fill="#fafafa" stroke="#888ea0" /></svg>
      </button>
      <span className="mt-1"><Caret light /></span>
      <span className="mt-1 h-px w-4 bg-[#c4c4c4]" />
      <button aria-label="缩放" className="mt-1">
        <svg width="12" height="12" viewBox="0 0 12 12"><path d="M1 1h8v8H1z" fill="#b2d39b" stroke="#8fb477" /><circle cx="7.500" cy="7.500" r="2.500" fill="#fff" stroke="#999" /><path d="M9.500 9.500l2 2" stroke="#999" strokeWidth="1.300" /></svg>
      </button>
      <span className="mt-1"><Caret light /></span>
      <span className="mt-auto mr-0.5 mb-px size-[5px] self-end rounded-full border border-[#aaa]" />
    </div>
  );
}

const viewControls = ["mesh", "solid", "sunOff", "shadeOff", "teapot", "cropOff", "cropOn", "lock3d", "glasses", "bulbMini", "screen", "analytic", "link3d", "constraint"];

function ViewArea() {
  return (
    <main className="flex min-w-0 flex-1 flex-col">
      <div className="flex h-[15px] items-center bg-[#cacaca]">
        <div className="flex h-[13px] w-[83px] items-center gap-1 bg-[#ffe082] px-0.5 font-bold">
          <Ico n="house" s={11} />{"{三维}"}
          <button aria-label="关闭视图" className="ml-auto pr-px"><Close /></button>
        </div>
        <button aria-label="视图列表" className="mr-1 ml-auto flex flex-col items-center gap-px"><span className="h-px w-1.5 bg-[#444]" /><Caret /></button>
      </div>
      <div className="flex flex-1">
        <div className="flex min-w-0 flex-1 flex-col bg-white">
          <div className="relative flex-1">
            <div className="absolute inset-0"><Model /></div>
            <ViewCube />
            <NavBar />
          </div>
        </div>
        <div className="flex w-3 items-center justify-center bg-[#f0f0f0]"><span className="h-3 w-[3px] rounded-[1px] bg-[#888]" /></div>
      </div>
      <div className="flex h-[13px] items-center bg-[#f0f0f0]">
        <span className="w-[52px] pl-3.5 whitespace-pre">1  :  100</span>
        <div className="flex w-[191px] justify-between">
          {viewControls.map((n) => <IconBtn key={n} n={n} label={n} />)}
        </div>
        <span className="ml-auto h-0.5 w-3 rounded-[1px] bg-[#888]" />
        <svg width="8" height="8" viewBox="0 0 8 8" className="ml-[207px]"><path d="M7 0v1M7 3v1M7 6v1M4 3v1M4 6v1M1 6v1" stroke="#aaa" strokeWidth="1.500" /></svg>
      </div>
    </main>
  );
}

type Row = { k: string; v?: string; dim?: boolean; btn?: boolean; focus?: boolean; check?: boolean };

const groups: { name: string; rows: Row[] }[] = [
  { name: "约束", rows: [{ k: "标高", v: "标高 1", focus: true }, { k: "标高中的高程", v: "0.0" }, { k: "主体", v: "标高 : 标高 1", dim: true }, { k: "主体中的偏移", v: "0.0" }, { k: "与邻近图元一同移动", check: true }] },
  { name: "文字", rows: [{ k: "基点坐标X", v: "23712.2", btn: true }, { k: "基点坐标Y", v: "14605.6", btn: true }, { k: "基点坐标Z", v: "-3000", btn: true }] },
  { name: "尺寸标注", rows: [{ k: "基面标高", v: "5000.0", btn: true }, { k: "基底标高", v: "2000.0", btn: true }, { k: "深度", v: "3000.0", dim: true }, { k: "管道出口", v: "2800.0", dim: true }, { k: "体积", v: "0.646 m³", dim: true }] },
  { name: "标识数据", rows: [{ k: "图像" }, { k: "注释" }, { k: "标记" }] },
  { name: "阶段化", rows: [{ k: "创建的阶段", v: "新构造" }, { k: "拆除的阶段", v: "无" }] },
];

function Properties() {
  return (
    <aside className="flex w-[202px] shrink-0 flex-col border-x-2 border-[#cacaca] bg-white">
      <div className="flex h-[15px] items-center justify-between bg-[#efefef] px-px">
        <h2>属性</h2>
        <button aria-label="关闭属性" className="pr-0.5"><Close /></button>
      </div>
      <button className="flex h-[45px] items-center border-b border-[#dcdcdc] bg-[#ececec] px-0.5 text-left leading-[10px]">
        <span className="mr-[3px] flex h-[42px] w-[42px] items-center justify-center border border-[#dedede] bg-white">
          <svg width="12" height="40" viewBox="0 0 12 40"><path d="M1.500 3v33a4.500 3 0 0 0 9 0V3z" fill="#5c5c5c" stroke="#2b2b2b" /><path d="M3 5v32" stroke="#888" /><path d="M.500 33v4a5.500 3 0 0 0 11 0v-4" fill="none" stroke="#222" /><ellipse cx="6" cy="3.500" rx="4.700" ry="2.700" fill="#777" stroke="#222" /></svg>
        </span>
        <span>室外管网水井<br />雨水井</span>
        <span className="ml-auto"><Caret /></span>
      </button>
      <div className="flex h-[14px] items-center bg-[#f0f0f0]">
        <div className="flex h-3 w-[151px] items-center bg-white pr-1">
          <select aria-label="图元过滤器" className="w-full appearance-none pl-px outline-none"><option>常规模型 (1)</option></select>
          <Chevron />
        </div>
        <button className="ml-px flex items-center gap-0.5 whitespace-nowrap"><Ico n="editType" s={9} />编辑类型</button>
      </div>
      <table className="h-[289px] w-full table-fixed border-collapse leading-[11px]">
        <colgroup><col className="w-[94px]" /><col /><col className="w-[9px]" /></colgroup>
        {groups.map((g) => (
          <tbody key={g.name}>
            <tr className="bg-[#dcdcdc]">
              <th colSpan={2} className="p-0 pl-px text-left font-normal">{g.name}</th>
              <td className="p-0 text-center"><svg width="4" height="5" viewBox="0 0 4 5" className="mx-auto mb-0.5"><path d="M.500 2L2 .500 3.500 2M.500 4.500L2 3l1.500 1.500" fill="none" stroke="#444" /></svg></td>
            </tr>
            {g.rows.map((r) => (
              <tr key={r.k} className={`border-b border-[#d4d4d4] ${r.dim ? "text-[#888]" : ""}`}>
                <th className="border-r border-[#d4d4d4] p-0 pl-[5px] text-left font-normal whitespace-nowrap">{r.k}</th>
                <td className={`border-r border-[#d4d4d4] p-0 pl-px whitespace-nowrap ${r.focus ? "outline outline-[#555] -outline-offset-1" : ""}`}>
                  {r.check ? <input type="checkbox" aria-label={r.k} className="block size-[9px] appearance-none rounded-[2px] border border-[#999] bg-white" /> : r.v}
                </td>
                <td className="p-0">{r.btn && <button aria-label={`关联${r.k}`} className="block h-[11px] w-1.5 rounded-[1px] border border-[#c4c4c4] bg-white" />}</td>
              </tr>
            ))}
          </tbody>
        ))}
      </table>
      <div className="mt-auto flex h-4 items-center justify-between bg-[#f0f0f0] pl-px">
        <a href="#" className="leading-[10px] text-[#1a6fc4] underline">属性帮助</a>
        <button className="h-[11px] w-[49px] bg-[#f8f8f8] leading-[10px] text-[#888]">应用</button>
      </div>
    </aside>
  );
}

const tree = [
  { t: "视图 (规程)", icon: "views", exp: "-", sel: true },
  { t: "协调", exp: "+", sub: true },
  { t: "卫浴", exp: "+", sub: true },
  { t: "图例", icon: "legend" },
  { t: "明细表/数量 (全部)", icon: "schedule" },
  { t: "图纸 (全部)", icon: "sheets" },
  { t: "族", icon: "family", exp: "+" },
  { t: "组", icon: "group", exp: "+" },
  { t: "Revit 链接", icon: "chain" },
];

function Expander({ kind }: { kind?: string }) {
  return (
    <svg width="10" height="7" viewBox="0 0 10 7" className="shrink-0">
      <path d="M3.500 3.500H10" stroke="#ccc" />
      {kind && <path d="M.500.500h6v6h-6z" fill="#fff" stroke="#b4bbc8" />}
      {kind && <path d={kind === "+" ? "M2 3.500h3M3.500 2v3" : "M2 3.500h3"} stroke="#5f7cb8" />}
    </svg>
  );
}

function Browser() {
  return (
    <aside className="flex w-[198px] shrink-0 flex-col bg-white">
      <div className="flex h-[13px] items-center justify-between bg-[#efefef] px-0.5">
        <h2>项目浏览器 - 室外管井管道.rvt</h2>
        <button aria-label="关闭项目浏览器"><Close /></button>
      </div>
      <ul className="grid h-[101px] auto-rows-fr pl-[3px]">
        {tree.map((n) => (
          <li key={n.t} className={`flex items-center ${n.sub ? "pl-[13px]" : ""}`}>
            <Expander kind={n.exp} />
            {n.icon && <span className="mr-0.5 ml-px"><Ico n={n.icon} s={10} /></span>}
            <span className={`px-px leading-[11px] ${n.sel ? "bg-[#dadada]" : ""}`}>{n.t}</span>
          </li>
        ))}
      </ul>
    </aside>
  );
}

function StatusBar() {
  return (
    <footer className="flex h-4 items-center text-[#222]">
      <span className="flex-1">常规模型 : 室外管网水井 : 雨水井</span>
      <Ico n="worksets" />
      <div className="ml-1 flex h-[11px] w-[133px] items-center bg-white pr-1">
        <select aria-label="工作集" className="w-full appearance-none outline-none"><option></option></select>
        <Chevron />
      </div>
      <button className="ml-1 flex w-[27px] items-center gap-0.5"><Ico n="filterGray" s={10} />:0</button>
      <IconBtn n="sheet" label="设计选项" className="w-3" />
      <IconBtn n="press" label="排除选项" className="ml-1 w-3" />
      <div className="ml-0.5 flex h-[11px] w-[133px] items-center bg-white pr-1 text-[#888]">
        <select aria-label="设计选项集" className="w-full appearance-none pl-px outline-none"><option>主模型</option></select>
        <Chevron />
      </div>
      <div className="mr-[42px] ml-[111px] flex items-center gap-[3px]">
        {["selA", "selB", "selC", "selD", "selE", "spin"].map((n) => <IconBtn key={n} n={n} label={n} />)}
        <button className="flex items-center"><Ico n="filter" />:1</button>
      </div>
    </footer>
  );
}

function Watermark() {
  return (
    <div className="pointer-events-none absolute right-8 bottom-[25px] flex items-center gap-2 text-[31px] leading-7 whitespace-pre text-[#6f6f6f] opacity-60">
      <svg width="44" height="36" viewBox="0 0 44 36">
        <path d="M16 0c9 0 16 6 16 13h-1c-8 0-14 5-14 11 0 1 0 2 .500 3-2 0-4 0-6-.600L6 30l1-5C3 22 0 18 0 14 0 6 7 0 16 0z" fill="currentColor" />
        <path d="M31 14.500c7 0 12.500 4.500 12.500 10 0 3.300-1.800 6-4.500 8l1 3.500-4-2c-1.600.500-3 .700-5 .700-7 0-12.500-4.500-12.500-10.200s5.500-10 12.500-10z" fill="currentColor" />
        <g fill="#fff"><circle cx="10.500" cy="9.500" r="2" /><circle cx="21.500" cy="9.500" r="2" /><circle cx="26.500" cy="21.500" r="1.700" /><circle cx="35.500" cy="21.500" r="1.700" /></g>
      </svg>
      <span>公众号 ·  Revit二次开发教程</span>
    </div>
  );
}

export default function App() {
  return (
    <div className="relative flex min-h-screen flex-col border-r-[3px] border-b-2 border-l-[3px] border-[#c0c0c0] bg-[#cacaca] font-['Noto_Sans','Noto_Sans_CJK_SC',sans-serif] text-[8px] leading-3 text-[#333]">
      <TitleBar />
      <MenuBar />
      <Ribbon />
      <QuickBar />
      <div className="flex h-[17px] items-center bg-[#e4eed6] pl-1">
        <span>修改 | 常规模型</span>
        <label className="ml-[18px] flex items-center gap-0.5">
          <input type="checkbox" className="size-[9px] appearance-none rounded-[2px] border border-[#999] bg-white" />
          与邻近图元一同移动
        </label>
      </div>
      <div className="flex flex-1 pt-px">
        <ViewArea />
        <Properties />
        <Browser />
      </div>
      <StatusBar />
      <Watermark />
    </div>
  );
}
